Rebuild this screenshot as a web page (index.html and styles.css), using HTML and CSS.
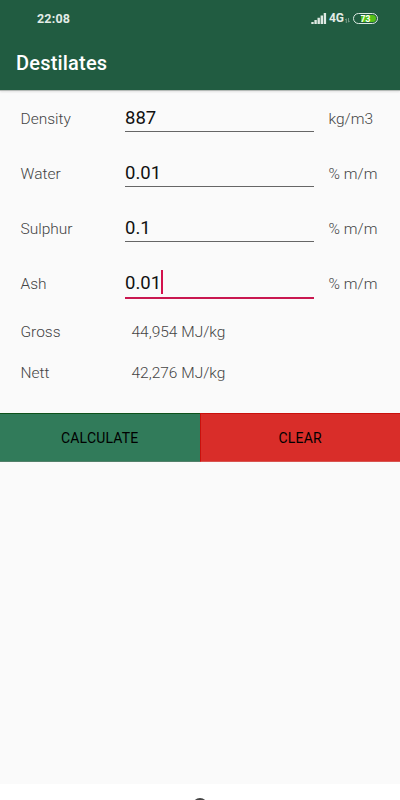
FILE: index.html
```
<!DOCTYPE html>
<html lang="en">

<head>
  <meta charset="UTF-8" />
  <meta name="viewport" content="width=device-width, initial-scale=1.0" />
  <title>Destilates</title>
  <link rel="stylesheet" href="styles.css">
</head>

<body>
  <header class="app-header">
    <div class="status-bar">
      <span class="clock">22:08</span>
      <div class="status-icons">
        <svg class="signal" width="16" height="12" viewBox="0 0 16 12">
          <path d="M0.3 10h2.4V12h-2.4zM3.4 8h2.4V12h-2.4zM6.5 5.8h2.4V12h-2.4zM9.6 3.6h2.4V12h-2.4zM12.7 1h2.4v11h-2.4z" fill="#dfe9e3" />
        </svg>
        <span class="network">4G</span>
        <svg class="data" width="5" height="5" viewBox="0 0 5 5">
          <path d="M1.3 5V.8L0 2.2M3.5 0v4.2L4.8 2.8" fill="none" stroke="#7fa08f" stroke-width=".9" />
        </svg>
        <div class="battery"><span>73</span></div>
      </div>
    </div>
    <h1 class="title">Destilates</h1>
  </header>

  <main>
    <div class="inputs">
      <div class="row">
        <span class="label">Density</span>
        <div class="field"><span class="value" contenteditable="true">887</span></div>
        <span class="unit">kg/m3</span>
      </div>
      <div class="row">
        <span class="label">Water</span>
        <div class="field"><span class="value" contenteditable="true">0.01</span></div>
        <span class="unit">% m/m</span>
      </div>
      <div class="row">
        <span class="label">Sulphur</span>
        <div class="field"><span class="value" contenteditable="true">0.1</span></div>
        <span class="unit">% m/m</span>
      </div>
      <div class="row">
        <span class="label">Ash</span>
        <div class="field active"><span class="value" contenteditable="true">0.01</span><span class="caret"></span></div>
        <span class="unit">% m/m</span>
      </div>
    </div>

    <div class="results">
      <div class="result">
        <span class="label">Gross</span>
        <span>44,954 MJ/kg</span>
      </div>
      <div class="result">
        <span class="label">Nett</span>
        <span>42,276 MJ/kg</span>
      </div>
    </div>

    <div class="buttons">
      <button class="calculate" type="button">CALCULATE</button>
      <button class="clear" type="button">CLEAR</button>
    </div>
  </main>

  <footer class="nav-bar">
    <svg width="16" height="16" viewBox="0 0 16 16">
      <circle cx="8" cy="8" r="7" fill="none" stroke="#444" stroke-width="1.8" />
    </svg>
  </footer>
</body>

</html>
```

FILE: styles.css
```
html,
body {
  margin: 0;
  padding: 0;
  height: 100vh;
}

body {
  font-family: Roboto, sans-serif;
  display: flex;
  flex-direction: column;
  overflow: hidden;
  background-color: #fafafa;
  color: #444;
}

.app-header {
  height: 90px;
  flex: none;
  background: #215c41;
  color: #fff;
  border-bottom: 1px solid #b5bab7;
  box-shadow: 0 1px 2px rgba(0, 0, 0, 0.1);
}

.status-bar {
  height: 36px;
  display: flex;
  align-items: center;
  justify-content: space-between;
  padding: 0 22px 0 37px;
  color: #e3ece7;
}

.clock {
  font-size: 12.5px;
  font-weight: 700;
  letter-spacing: 0.2px;
}

.status-icons {
  display: flex;
  align-items: center;
}

.network {
  font-size: 12px;
  font-weight: 700;
  margin-left: 2px;
}

.data {
  margin: 5px 3px 0 1px;
}

.battery {
  width: 25px;
  height: 11px;
  box-sizing: border-box;
  border: 1px solid #dce9e1;
  border-radius: 6px;
  padding: 1px;
}

.battery span {
  display: block;
  height: 7px;
  border-radius: 4px;
  background: linear-gradient(to left, #55c117 73%, #215c41 73%);
  color: #fff;
  font-size: 8.5px;
  font-weight: 700;
  line-height: 8px;
  text-align: center;
}

.title {
  margin: 0;
  padding: 14px 16px 0;
  font-size: 20px;
  font-weight: 500;
  line-height: 26px;
  letter-spacing: 0.2px;
}

main {
  flex: 1;
}

.row {
  display: flex;
  align-items: center;
  height: 55.2px;
  padding-left: 20.5px;
  font-size: 15.5px;
  font-weight: 300;
}

.label {
  width: 104.5px;
  flex: none;
}

.field {
  display: flex;
  align-items: center;
  box-sizing: border-box;
  width: 189px;
  height: 28px;
  margin-top: -1px;
  border-bottom: 1px solid #666;
  color: #111;
}

.field.active {
  height: 29px;
  margin-top: 0;
  border-bottom: 2px solid #c91850;
}

.value {
  font-size: 18.5px;
  font-weight: 400;
  line-height: 26px;
  outline: none;
}

.caret {
  width: 2px;
  height: 24px;
  margin-top: -2px;
  background: #d3124d;
}

.unit {
  margin-left: 14.5px;
}

.result {
  display: flex;
  align-items: center;
  height: 41px;
  padding-left: 20.5px;
  font-size: 15.5px;
  font-weight: 300;
}

.result .label {
  width: 111px;
}

.buttons {
  display: flex;
  height: 49px;
  margin-top: 19px;
}

.buttons button {
  flex: 1;
  padding: 1px 0 0;
  border: 1px solid;
  border-width: 1px 0;
  font-family: inherit;
  font-size: 14px;
  letter-spacing: 0.2px;
  color: #000;
  cursor: pointer;
}

.buttons .calculate {
  background-color: #317b5a;
  border-color: #0d521a #000 #52806a;
}

.buttons .clear {
  background-color: #d92d29;
  border-color: #c9100c #000 #d85450 #c9100c;
  border-left-width: 1px;
}

.nav-bar {
  display: flex;
  justify-content: center;
  height: 16px;
  flex: none;
  background: #fff;
}

.nav-bar svg {
  margin-top: 14px;
  flex: none;
}
```
